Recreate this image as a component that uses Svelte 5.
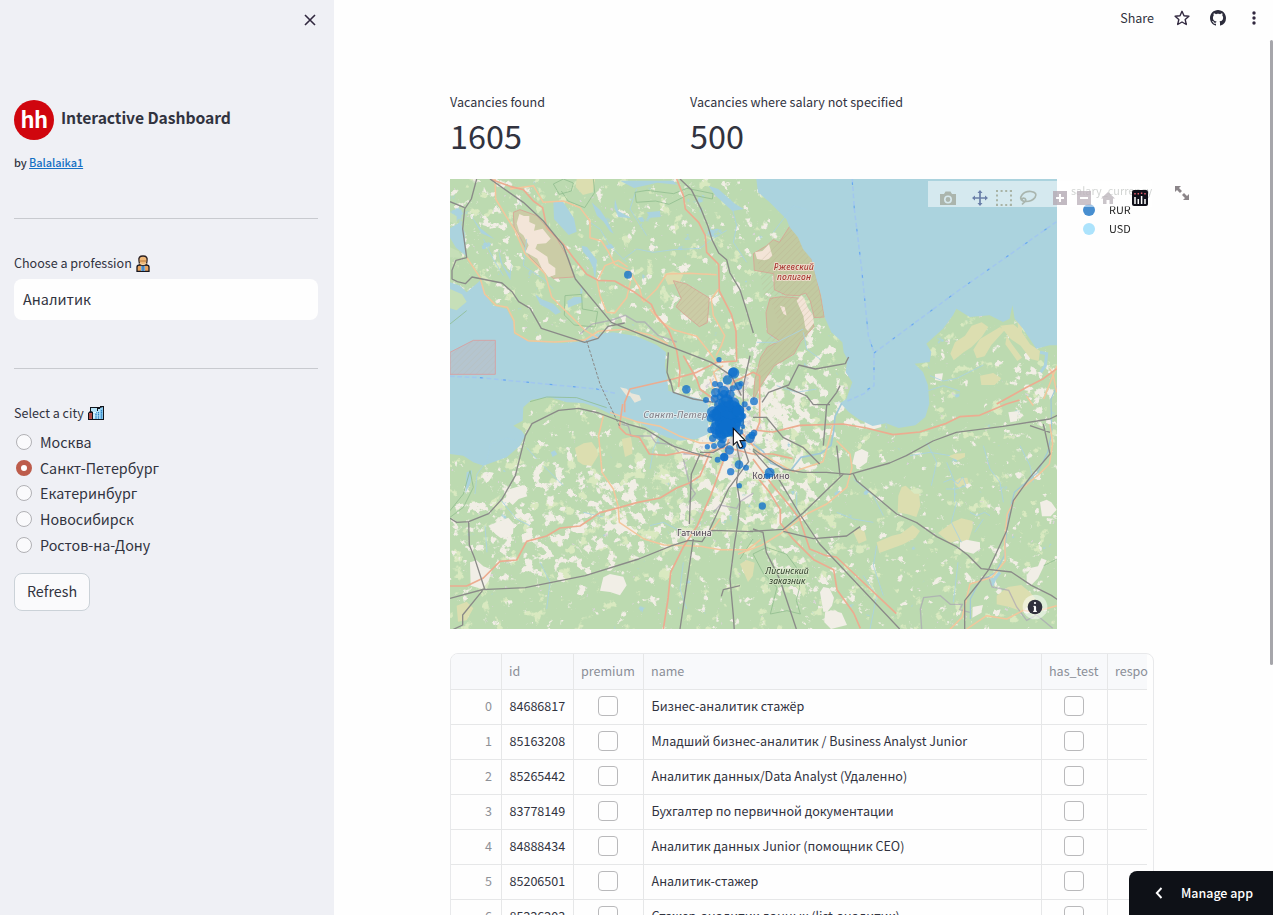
<script>
  const cities = ['Москва', 'Санкт-Петербург', 'Екатеринбург', 'Новосибирск', 'Ростов-на-Дону'];
  let city = $state('Санкт-Петербург');

  const rows = [
    ['84686817', 'Бизнес-аналитик стажёр'],
    ['85163208', 'Младший бизнес-аналитик / Business Analyst Junior'],
    ['85265442', 'Аналитик данных/Data Analyst (Удаленно)'],
    ['83778149', 'Бухгалтер по первичной документации'],
    ['84888434', 'Аналитик данных Junior (помощник CEO)'],
    ['85206501', 'Аналитик-стажер'],
    ['85226203', 'Стажер-аналитик данных (list-аналитик)']
  ];

  // land-cover textures: id, noise frequency, seed, cut-off, colour
  const covers = [
    ['cream', '0.032', 3, -0.69, '#f1eee5'],
    ['lime', '0.024', 11, -0.7, '#d9e9c0'],
    ['pond', '0.022', 37, -0.8, '#aad3df'],
    ['deep', '0.05', 52, -0.78, '#d9d4d6']
  ];

  const lone = [
    [534, 287, 12], [807, 542, 8], [709, 631, 13]
  ];
  // vacancy markers around the city centre
  const spots = [
    [191, 69, 17], [189, 67, 14], [172, 90, 14], [135, 102, 9], [150, 104, 9], [188, 115, 9], [205, 108, 12], [213, 101, 8],
    [137, 128, 14], [160, 124, 17], [180, 133, 14], [108, 150, 9], [134, 146, 12], [150, 140, 10], [170, 150, 18],
    [224, 163, 9], [236, 175, 7], [252, 154, 12], [150, 165, 18], [190, 160, 18], [165, 175, 22], [205, 180, 16],
    [128, 186, 17], [145, 195, 22], [180, 190, 26], [207, 200, 18], [220, 198, 9], [122, 204, 12], [160, 215, 26],
    [190, 215, 24], [208, 216, 14], [219, 230, 7], [140, 235, 20], [122, 240, 10], [170, 240, 22], [186, 244, 16],
    [152, 256, 16], [128, 265, 11], [140, 252, 14], [154, 282, 13], [158, 268, 12], [178, 300, 14], [112, 290, 8],
    [132, 288, 9], [143, 329, 9], [162, 321, 13], [163, 322, 12], [215, 284, 14], [240, 265, 14], [252, 249, 10], [246, 256, 11],
    [207, 344, 13], [228, 353, 9], [182, 365, 11], [208, 407, 8], [277, 468, 11], [299, 368, 15], [292, 378, 9],
    [196, 172, 16], [176, 205, 24], [150, 180, 16], [200, 236, 10], [212, 246, 8],
    [168, 162, 24], [185, 178, 28], [152, 190, 26], [200, 196, 24], [170, 212, 30], [148, 222, 24], [192, 226, 20],
    [158, 242, 24], [172, 232, 26], [134, 196, 18], [205, 182, 18], [162, 132, 12], [216, 286, 10]
  ];
</script>

<div class="app">
  <aside>
    <div class="closebar">
      <svg width="12" height="12" viewBox="0 0 12 12"><path d="M1 1L11 11M11 1L1 11" stroke="#31283f" stroke-width="1.6" fill="none" /></svg>
    </div>
    <div class="brand">
      <div class="logo"><span>hh</span></div>
      <h1>Interactive Dashboard</h1>
    </div>
    <div class="by">by <a href="#top">Balalaika1</a></div>
    <hr class="h1" />
    <div class="lbl prof">
      <span>Choose a profession</span>
      <svg width="14" height="17" viewBox="0 0 14 17">
        <path d="M1 16.5V12q0-2 3-2h6q3 0 3 2v4.500z" fill="#e9a560" stroke="#16161f" stroke-width="1.300" />
        <path d="M5 10h4v6H5z" fill="#6fa9d8" /><path d="M7 11v5" stroke="#2a63a8" />
        <path d="M3 6q-1-5 4-5t4 5l-.5 3Q7 12 3.500 9z" fill="#efb878" stroke="#2b2022" stroke-width="1.300" />
        <path d="M3.500 6h7" stroke="#b87838" /><path d="M3.500 8.500Q7 11 10.500 8.500" stroke="#fbe0b0" fill="none" />
      </svg>
    </div>
    <div class="input">Аналитик</div>
    <hr class="h2" />
    <div class="lbl city">
      <span>Select a city</span>
      <svg width="16" height="14" viewBox="0 0 16 14">
        <path d="M0 14V7l2-2V1h10V0h4v14z" fill="#11131a" />
        <path d="M3 2h6v3h1V3h2v10H5V6L3 5z" fill="#b5e3f7" /><path d="M12 2l3-1v12h-3z" fill="#8fcdf0" />
        <path d="M1 7h3v6H1z" fill="#c4534a" /><path d="M1 9h3M1 11h3" stroke="#8b3d3d" stroke-width=".7" />
        <path d="M8 6v7M10.500 6v7M13.500 4v9" stroke="#2f82c4" stroke-width="1.300" stroke-dasharray="1.500 .6" />
        <path d="M5 6.500h3M5 9h2M5 11h2" stroke="#e6fbff" />
      </svg>
    </div>
    <div class="radios">
      {#each cities as c}
        <button class="radio" onclick={() => (city = c)}>
          <i class:on={city === c}></i><span>{c}</span>
        </button>
      {/each}
    </div>
    <button class="refresh"><span>Refresh</span></button>
  </aside>

  <main>
    <header>
      <span class="share">Share</span>
      <svg width="16" height="16" viewBox="0 0 16 16"><path d="M8 1.300l2 4.500 4.900.5-3.700 3.300 1.100 4.900L8 12l-4.300 2.500 1.100-4.900L1.100 6.300 6 5.800z" fill="none" stroke="#31283f" stroke-width="1.400" stroke-linejoin="round" /></svg>
      <svg width="16" height="16" viewBox="0 0 16 16"><path fill="#2c2c3c" d="M8 0C3.580 0 0 3.580 0 8c0 3.540 2.290 6.530 5.470 7.590.4.070.55-.17.55-.38 0-.19-.01-.82-.01-1.490-2.010.37-2.530-.49-2.690-.94-.09-.23-.48-.94-.82-1.130-.28-.15-.68-.52-.01-.53.63-.01 1.080.58 1.230.82.72 1.210 1.870.87 2.330.66.07-.52.28-.87.51-1.070-1.780-.2-3.640-.89-3.640-3.950 0-.87.31-1.590.82-2.150-.08-.2-.36-1.020.08-2.120 0 0 .67-.21 2.200.82.64-.18 1.320-.27 2-.27s1.360.09 2 .27c1.530-1.040 2.200-.82 2.200-.82.44 1.100.16 1.920.08 2.120.51.56.82 1.270.82 2.150 0 3.070-1.870 3.750-3.650 3.950.29.25.54.73.54 1.480 0 1.070-.01 1.930-.01 2.200 0 .21.15.46.55.38A8.010 8.010 0 0 0 16 8c0-4.420-3.580-8-8-8" /></svg>
      <svg width="16" height="16" viewBox="0 0 16 16" fill="#31283f"><circle cx="8" cy="3" r="1.700" /><circle cx="8" cy="8" r="1.700" /><circle cx="8" cy="13" r="1.700" /></svg>
    </header>

    <section class="metrics">
      <div><p>Vacancies found</p><b>1605</b></div>
      <div><p>Vacancies where salary not specified</p><b>500</b></div>
    </section>

    <section class="chart">
      <svg class="map" width="607" height="450" viewBox="0 0 1821 1350">
        <defs>
          {#each covers as [id, freq, seed, cut, color]}
            <filter {id} filterUnits="userSpaceOnUse" x="0" y="0" width="1821" height="1350" color-interpolation-filters="sRGB">
              <feTurbulence type="fractalNoise" baseFrequency={freq} numOctaves="5" {seed} result="n" />
              <feComposite in="SourceGraphic" in2="n" operator="arithmetic" k2="1" k3="1" k4={cut} />
              <feComponentTransfer result="t"><feFuncA type="linear" slope="12" /></feComponentTransfer>
              <feFlood flood-color={color} /><feComposite in2="t" operator="in" />
            </filter>
          {/each}
          <filter id="soft" x="-50%" y="-50%" width="200%" height="200%"><feGaussianBlur stdDeviation="35" /></filter>
          <pattern id="hatch" width="13" height="13" patternUnits="userSpaceOnUse" patternTransform="rotate(45)"><path d="M0 0V13" stroke="#b7a98c" stroke-width="3" opacity=".45" /></pattern>
        </defs>
        <rect width="1821" height="1350" fill="#bcdab0" />
        <g filter="url(#lime)"><rect width="1821" height="1350" opacity=".03" /><g filter="url(#soft)"><ellipse cx="850" cy="850" rx="300" ry="220" opacity=".13" /><ellipse cx="420" cy="1020" rx="330" ry="150" opacity=".07" /><ellipse cx="1100" cy="1150" rx="130" ry="160" opacity=".06" /></g></g>
        <g filter="url(#cream)">
          <g filter="url(#soft)">
            <ellipse cx="280" cy="1020" rx="270" ry="190" opacity=".14" /><ellipse cx="640" cy="1000" rx="210" ry="150" opacity=".13" />
            <ellipse cx="850" cy="710" rx="180" ry="190" opacity=".26" /><ellipse cx="960" cy="930" rx="180" ry="120" opacity=".16" />
            <ellipse cx="130" cy="170" rx="110" ry="200" opacity=".09" /><ellipse cx="1090" cy="540" rx="80" ry="100" opacity=".12" />
            <ellipse cx="1120" cy="710" rx="150" ry="90" opacity=".14" /><ellipse cx="1100" cy="1190" rx="130" ry="120" opacity=".1" />
            <ellipse cx="1760" cy="640" rx="60" ry="130" opacity=".16" /><ellipse cx="1600" cy="1180" rx="150" ry="70" opacity=".09" />
            <ellipse cx="680" cy="380" rx="220" ry="90" opacity=".08" /><ellipse cx="940" cy="220" rx="50" ry="120" opacity=".12" />
            <ellipse cx="600" cy="170" rx="220" ry="140" opacity=".04" />
          </g>
        </g>
        <g filter="url(#deep)"><g filter="url(#soft)"><ellipse cx="835" cy="710" rx="90" ry="150" opacity=".3" /><ellipse cx="740" cy="1040" rx="50" ry="40" opacity=".25" /></g></g>
        <g filter="url(#pond)"><g filter="url(#soft)"><ellipse cx="700" cy="120" rx="200" ry="90" opacity=".11" /><ellipse cx="15" cy="110" rx="30" ry="110" opacity=".4" /><ellipse cx="1500" cy="900" rx="60" ry="40" opacity=".14" /></g></g>

        <!-- fields and heath -->
        <g fill="#dcdeb0">
          <path d="M380 0h55l-6 40-30 8-22-24zM640 285l30-8 30 10-12 26-34 4zM375 807l26-14 24-4 14 20 6 20-20 32-26-4-16-10zM515 780l28-6 4 26 0 24-22 10zM20 1280l30-12 20 20-20 36-26 4z" />
          <path d="M1345 950l10-26 12-4 26 24 14 0 4 36-12 34-26-8-30-6zM1480 1050l30-22 24-10 34 8 0 20-14 44-34-6-20 8-36-30zM1280 1090l46-20 26-6 36-26 22 18-14 20-36 20-72 26zM1510 910l18 -12 24-2 4 18-20 4-6 12zM1495 832l20-8 30 -2 0 12-22 10zM1640 1250l34-26 40-6 26 22 18 20-20 16-20 22-40-14-38-8zM1210 1060l14-12 20 10 6 26-24 10zM870 1155l20-12 24 8-6 40-14 18z" />
          <path d="M1515 490l30-20 20-30 30-10 20 14-20 30-30 30-24 16-30 24-10-20zM1590 480l60-36 14 10-40 44-20 34-24 6-10-26zM1650 440l40-4 20 16 30 44 30 20-4 30-24-6-30-40-30-20zM1590 590l40-8 24 16-20 20-40 0zM1670 470l16 26 30 40-14 10-36-50zM1700 400l16 0 0 60 40 60-20 0-30-50z" />
        </g>
        <g fill="#f1eee6">
          <path d="M180 930l40-12 12 34-26 8-18 18-22-20zM115 1040l20-8 40-16 16 18-2 30-36 14-16-12zM60 1150l20-6 20 18 26 10-10 34-20 24-34-10zM460 1195l20-10 40 8 10 26-20 30-30-10-30-4zM1110 1240l10-16 18 4 14 28-6 24-14 18-12 0zM1125 1300l20-6 30 8 16 36-48 12-20-20zM1240 708l18-12 32 4 4 44-20 6-26 0zM1215 820l20-10 20 10 -4 30-20 14-24-10zM1530 1090l20-8 40 8 0 20-20 14-40-10zM1770 970l20-8 14 8 16 22-18 20-26 0zM1730 1190l14-24 20-4 10-24 16 6-26 54-20 20-14 0zM1675 700l30-4-4 30-20 4zM1568 1284l31-6-6 24-26 14zM1455 585l24-2-4 24-20-4z" />
        </g>

        <!-- training grounds -->
        <g stroke="#d9a294" stroke-width="2.500">
          <path d="M190 100l20-8 50 18 60 68 36 62 16 54-62 4-36-30-34-34-28-56-20-34z" fill="#cbcca6" />
          <path d="M208 105l14 6 16 0 0 18 18 8 -4 18 26-6 24 30-14 14-26 2-6 14 36 24 4 20 20 14 0 20-20 8-20-26-14-30-36-20 10-20-16-30-12-10-8-26z" fill="#f3e5d8" stroke="none" />
          <path d="M670 305l40 10 68 42-6 74-24 12-46-38-24-22 16-24z" fill="#cbcca6" />
          <path d="M1019 142l24 20 22 50 18 24 14 50 14 60 12 68-30 2-12-50-14-24-20 8-40-2-34-16-2-48-58-10-3-50 40-24 20-18 18 8z" fill="#c2caa1" />
          <path d="M960 358l34-5 52 4 36 60 10 26-40 44-20 38-60 36-40 60-22 42 4-58 18-70 20-30 36-20-36-24-4-60z" fill="#c2caa1" />
        </g>
        <path d="M1040 365l14-16 8 8 12 30 14 20 4 24-18 26-8-10-6-36zM915 220l22-4 20-20 10 34-10 10-14 4-22-4zM990 380l14 4 6 26-10-6z" fill="#f3e4d7" />
        <path d="M670 305l40 10 68 42-6 74-24 12-46-38-24-22 16-24zM1019 142l46 70 32 74 26 128-60 20-120-76-20-110zM960 358l92 0 40 84-60 82-80 60-34 44 20-130 50-60z" fill="url(#hatch)" />

        <!-- open water -->
        <g fill="#abd3de">
          <path d="M0 310L30 320 50 340 90 305 108 350 130 380 170 390 190 430 192 465 240 488 340 492 400 487 440 465 490 460 560 472 620 498 648 520 645 560 652 600 655 635 690 645 760 662 775 680 775 765 740 780 690 785 650 775 600 750 560 727 520 717 480 705 440 685 400 672 350 670 300 655 245 662 220 685 218 725 190 740 215 755 225 770 210 800 170 835 100 860 70 850 40 830 0 825z" />
          <path d="M919 0l5 40 35 30 25 25 25 25 10 25 25 30 15 35 25 30 15 60 15 50 10 65 20 45 33 30 4 30 11 20-5 40 20 30-18 50-18 12 25 27 30 22 42 20 40-8 38 14 50-8 30-25 12-40-4-55-15-40-25-25 45-5 5-30-15-25 50-45 30-40 10-20 40 25 60-5 40 20 20-10 8-40 7 40 25 30 40 60 40-10h32V0z" />
          <path d="M310 70l26-6 36 54 8 40-24 10-44-48zM395 200l16 4 30 40-6 62-6-40-14-30-16-18zM425 70l26 24 20 30 20 40-10-6-20-30-20-18zM495 60l10 36 40 22-40-4-12-28zM510 5l160 0 12 12-60-6-70 16zM775 20l30 10 50 44 26 16-34 6-50-46zM255 345l20 16 36 14 22 24-16 8-20-16-26-14zM60 105l30 42 44 34-40-18zM145 210l14 50 20 24 6-36-4 56-30-54zM465 200l18-6 10 12-22 4zM590 100l40-4 2 18-30 2zM30 130l14 30 4 70-30-24-18-30v-28zM352 366l20-12 22 0 4 16-24 8-20 8zM302 820l12-6 8 12-14 8zM50 880l16-6-4 36-16 34z" />
        </g>
        <path d="M0 330l36 16 14 22-30 26-20-6zM0 205l26 12 10 20-36-2zM0 100l20 12 0 24-20-8z" fill="#c6dfb8" /><path d="M510 625l20 4 14 14 24 6 6 14-20 8-14-20-10 0z" fill="#e8e6da" />
        <g fill="none" stroke="#a9d3e2" stroke-width="2.500" stroke-linejoin="round">
          <path d="M520 240l40-30 50 10 60-8 80-4 40-30 40-24M420 130l30 20 30 50 50 50M100 180l30 60 30 50M230 180l-10 80 60 40 30 30M560 30l-20 60 50 80M840 60l20 80-10 50 40 60M600 870l10-60 24-50 20-10M75 945l6-60 30-40 10-50 50-18 30 8M150 960l50 60 40 20M105 1040l6 80M270 1150l30 60-10 80M600 1040l40-10 60 30M700 1150l-10 80 20 60M280 860l60 60M260 840l-30-34M400 1000l60 14" />
          <path d="M970 160l60-80 40 12M1060 450l-80 40-60 0M980 620l60 20 60-10M1060 460l10 50 40 30M1430 790l30 60-16 70M1520 970l-16 60 30 60M1490 850l24 60 0 60M1600 800l20 70 30 40 10 60M1710 800l30 60 10 50M1600 1020l-26 40M1280 1100l-10 60 30 90M1510 1270l14-120M1160 1000l50 20 60 10M1210 900l60 50 30 60M1380 830l60-10 60 10M1040 940l0 60-20 40M1240 1190l40 60-20 100" />
          <path d="M1480 910l24-10 20 14 14-20 10 26-30 10-30 0M1560 1000l20 10 24-10 16 10M1440 590l40 16 40-8 80-40M1420 640l60-20 50 16" />
        </g>
        <g fill="none" stroke="#a0c8d8" stroke-width="5">
          <path d="M909 795l30 22 24 36 60 20 30-38 60-12 30-24 8-42 4-44 20-40" />
          <path d="M1821 620l-18 40 2 100-12 60-30 60-70 60-20 80-10 110-26 50-50 30-26 50 0 60" stroke-width="3.500" />
        </g>
        <path d="M1770 520l20 4-4 36-14 20M1650 1180l-16 20-8 20" fill="none" stroke="#abd3de" stroke-width="9" />

        <!-- protected areas -->
        <g fill="none" stroke="#8ebb8c" stroke-width="3" opacity=".75">
          <path d="M310 15l30-15 30 12-6 24-36 10zM430 0l4 40-30 46-50-20-20-30M555 40l36-6 80 10 40-16 78 16-2 16-70-14-60 30-40-10-58 4zM345 350l50-4 2 44 46 8-8 46-62-6-30-30zM0 435l50-40M0 1015l40-30 30-60-10-50-20 70-40 50M240 668l50-14 90 2 90 30" />
          <path d="M909 1125l40-20 60 20 30 40 10 60-10 40 12 40-40-10-50 10 20-80-40-40zM1821 1140l-40 20M870 1140l39-60" />
        </g>
        <g fill="none" stroke="#a8a0b4" stroke-width="4" opacity=".65">
          <path d="M390 465l36-30 60-12 40-14 34 20 24 0 40 40 56 20M515 735l20 6 8 30 60 0 14 20 50 6 20 24 32 0M700 840l20 80 16 24-20 26M790 1000l20-22 50 10 10-20 40-26M700 825l50 0" />
          <path d="M1415 1350l-4-60 10-34 50-6 30 26 36 0-8 16 30 8M1590 1200l26-6 10 30 50 10 24 50 30 40 30-16 48 40" />
        </g>
        <path d="M0 520l70-36h66v102H0z" fill="#b8c2ca" fill-opacity=".8" stroke="#d4a4a6" stroke-width="3" />
        <path d="M0 520l70-36h66v102H0z" fill="url(#hatch)" opacity=".5" />
        <g fill="none" stroke="#a2c7ee" stroke-width="4.500" stroke-dasharray="14 8">
          <path d="M0 592l90 4 350 34 60 14M1207 0l6 90 22 180 20 200 17 50 0 100-30 24-50 22M1272 522l250-185 200-140 99-70" />
        </g>
        <g fill="none" stroke="#66a9ee" stroke-width="3.500" stroke-dasharray="8 62"><path d="M90 596l350 34 60 14M1207 10l6 80 22 180 20 200 17 50v100l-62 36M1272 522l250-185 200-140 99-70" /></g>

        <!-- secondary roads -->
        <g fill="none" stroke="#f3c69c" stroke-width="4.500" stroke-linejoin="round">
          <path d="M50 235l40 60 14 50 34 34 34 6 20 40 2 36 40 24 80 4 90-6 40-26 80-6 80 18 50 26M135 0l2 60 30 50 28 44 30 70 40 40 20 20 20 70 40 40 60 60 40 24M180 30l70-10 30 50 60-4 50 20 30 40 0 50 34 10 20 30 20 40 44 20 30 50 10 40M445 300l20-40 40-16 28 20M440 300l10 50 20 50 24 2 36-46 12-50M580 370l40-40 30-45 70-2 80 4M600 390l30 36 40 26 70 20 40 50 20 30M806 330l-22 30 6 50 34 60-10 30-16 30" />
          <path d="M460 710l-14 60 10 110 34 50 14 50 4 50 74 50 60 18 110 4 60 10 80 0 40-30M480 700l80 28 70 14 60 30 60 20 40 0M780 600l20 60 36 20M820 560l-30 20 30 80M740 1070l40-10 30-40" />
          <path d="M909 800l30 28 90 50 90-30 20-70 10-40M1160 785l40 40 6 40-16 60-60 50-60 30-40 30-40 30-56 34-70 26M1820 640l-10-50-10-20M1750 680l-20-28M1800 735l8 60-10 60-30 30-60 50-36 70-8 80 2 60-40 50-66 20-24 100-60 60-50 40M1550 1350l60-40 60 10 50-26 30 6 70-20M1821 560l-40 100" />
        </g>
        <!-- trunk roads -->
        <g fill="none" stroke="#ecac90" stroke-width="5" stroke-linejoin="round">
          <path d="M120 0l60 22 40 10 30 34 28 20 12 60 50 50 30 40 40 50 34 18 50 2 60 34 50 36 12 28 40 50 24 60 10 60-4 50M680 0l20 50 6 40 40 40 20 40 4 50 36 36 2 80 36 70 14 50 2 90-60 4-60 30-70 20-130 30-16 40 0 30" />
          <path d="M518 675l-10 70 20 20 40 10 30 50 50 4 50-10 60 12 30-16 40-10 80 20 60 0 60 14M0 1221l50 0 50-24 50-50 50-4 30-56 60-16 40-24 60-6 60-40 60-16 50-14 70-14 50-30 40-16 30-20 30-70M640 1350l14-90 8-80 40-80 40-60 40-90 40-110 14-60M700 530l40 70 10 30 40 30 24 40" />
          <path d="M909 753l60 6 80-20 130-4 70 12 80 20 80-8 80-26 40-20 60-4 80-34 40-12M1640 675l90-50 50-26 40-30M909 840l60 80 50 60 30 40 30 90 50 20 30 4 180 170M909 880l50 60 32 52 0 40 40 50 60 60 60 30 10 60 50 70 20 46M909 800l-60-70-20-50 20-70 60-30 20 10 0 140-24 60" />
        </g>
        <!-- railways -->
        <g fill="none" stroke="#8a8a88" stroke-width="4" stroke-linejoin="round">
          <path d="M120 0l100 70 60 56 60 74 36 100 108 130 170 70 130 50 60 40 30 60M80 0l-16 60-20 30-6 60 12 86-32 8-12 30 0 26 16 8 24 6 20-20 90 18 30 26 20 30 34 20 34 60 130 42 40-12 30-36 50-10M0 68l44 18M690 0l34 32 30 60 20 50 12 40 20 40 24 20 10 40 30 50 16 50 24 80" />
          <path d="M410 485l40 130 60 130" stroke-dasharray="9 5" stroke-width="3" />
          <path d="M900 530l-20 90 0 120-20 60 10 50-10 60 10 60-6 60-10 60-14 110 10 110 6 90M660 600l10 40 60 20 60 10M655 520l-4 60 10 30" />
          <path d="M0 1018l20 12 36-2 60-24 40-44 40-70 30-120 20-36 80-40 60-6 60 14 90 34 50 14 80 50 60 20 60 16M56 1028l2 70 16 40 30 92-104 28M96 1232l130-6 180-36 160-50 100-40 50-16 40 4 20-30 60-130 60-80-20-60M98 1234l-60 74 0 30-38 18M690 1350l40-270M750 825l-26 60-6 150M750 820l40 0 50-30M738 1070l50-16 121 4M870 1220l-50 12-6 20" />
          <path d="M909 810l90 60 60 10 70 0 70 6 120-34 50-22 80-44 70-26 140-18 140-22 25-12M909 815l80 90 60 100 60 90 240 255M909 715l40 0 50 60 60 30 50 50M1180 885l-10 10-110 106-60 50-100 6M1160 800l10 90M1210 885l10 20 60 50 60 50 60 26 60 42 60 30 34 26 40 40 90 10 60 40 60 30 66 45M1780 735l20 90-60 70-50 70-20 90-56 120-30 40-40 50 0 90M1000 1057l90 22 100-8 40-28M909 1050l30 10 10 60 40 80 50 150M936 670l20-30 60-22 30-60 50 12 90-16 10-20M1010 625l60 26 20 26 50 0M1120 800l10-120 30-40 10-20M1740 740l60 20" />
        </g>

        <!-- place names -->
        <g font-family="'Noto Sans', sans-serif" stroke-linejoin="round" paint-order="stroke" text-anchor="middle">
          <g font-size="26" font-style="italic" font-weight="500" fill="#a93a34" stroke="#ecdccb" stroke-width="6"><text x="1031" y="274" textLength="120">Ржевский</text><text x="1032" y="304" textLength="102">полигон</text></g>
          <g font-size="26" font-style="italic" fill="#2c3b28" stroke="#d6e7c8" stroke-width="5"><text x="1011" y="1184" textLength="130">Лисинский</text><text x="1012" y="1215" textLength="108">заказник</text></g>
          <text x="676" y="717" font-size="28" font-style="italic" font-weight="500" fill="#85858e" stroke="#e4eef0" stroke-width="5" textLength="192">Санкт-Петер</text>
          <text x="733" y="1070" font-size="27" fill="#4b4350" stroke="#eeeae4" stroke-width="5" textLength="104">Гатчина</text>
          <text x="963" y="901" font-size="26" fill="#4b4350" stroke="#eeeae4" stroke-width="5" textLength="112">Колпино</text>
        </g>

        <g fill="#0d6ecc" fill-opacity=".76">
          {#each lone as [x, y, r]}<circle cx={x} cy={y} r={r} />{/each}
          <g transform="translate(660 513)">{#each spots as [x, y, r]}<circle cx={x} cy={y} r={r} />{/each}</g>
        </g>
        <path d="M850 748v50l11-10 8 18q5 2 9-4l-8-17h16z" fill="#fff" stroke="#14141c" stroke-width="3.500" />
        <circle cx="1755" cy="1284" r="37" fill="#fff" opacity=".5" />
        <circle cx="1755" cy="1284" r="22" fill="#30303c" /><path d="M1755 1272v.1M1755 1284v12" stroke="#fff" stroke-width="6.500" stroke-linecap="round" fill="none" /><path d="M1750 1282h6M1749 1297h12" stroke="#fff" stroke-width="3" />
      </svg>

      <div class="legend">
        <div class="ltitle">salary_currency</div>
        <div class="litem"><i class="rur"></i><span>RUR</span></div>
        <div class="litem"><i class="usd"></i><span>USD</span></div>
      </div>

      <svg class="modebar" width="224" height="26" viewBox="0 0 224 26">
        <rect width="224" height="26" fill="#fff" opacity=".5" />
        <g fill="#a4ada2" opacity=".85">
          <path d="M12 13h4l1.500-2.500h5L24 13h4v11H12z" /><circle cx="20" cy="18.500" r="3.200" fill="none" stroke="#d8e9ee" stroke-width="1.600" />
        </g>
        <g stroke="#6a7fa8" stroke-width="1.700" fill="#6a7fa8"><path d="M52 10.500v13M45.500 17h13" /><path d="M52 9l2.500 3h-5zM52 25l2.500-3h-5zM44 17l3-2.500v5zM60 17l-3-2.500v5z" stroke="none" /></g>
        <path d="M68 10h16M68 24h16M69 9v16M83 9v16" stroke="#a9b3a5" stroke-width="2" stroke-dasharray="2 2.600" fill="none" />
        <path d="M95 20q-4-2-1-6 3-4 9-3.500 7 1 4 6-3 4-9 4-4 0-4-2t3-1q2 2-1 4l-2 2" fill="none" stroke="#a9b5ae" stroke-width="1.700" />
        <g opacity=".8">
          <path d="M125 10h14v14h-14z" fill="#b3a9b2" /><path d="M132 13v8M128 17h8" stroke="#fff" stroke-width="2" />
          <path d="M149 10h14v14h-14z" fill="#beb4bd" /><path d="M152 17h8" stroke="#fff" stroke-width="2" />
          <path d="M173 17.500l7-6.500 7 6.500h-2V23h-3.500v-4h-3v4H175v-5.500z" fill="#bdb6bd" />
        </g>
        <rect x="204" y="9" width="16" height="16" rx="2" fill="#10101a" />
        <path d="M207 16v7M210.300 18v5M213.600 15v8M217 18v5" stroke="#fff" stroke-width="1.500" /><path d="M207 12v1.500M210.300 12v1.500M213.600 11.500v1.500M217 12v1.500" stroke="#e45a6c" stroke-width="1.500" />
      </svg>
      <svg class="expand" width="16" height="16" viewBox="0 0 16 16"><path d="M1 1h6L5 3l3 3-2 2-3-3-2 2zM15 15H9l2-2-3-3 2-2 3 3 2-2z" fill="#8b8589" /></svg>
    </section>

    <section class="table">
      <div class="grid head">
        <div></div><div>id</div><div>premium</div><div>name</div><div>has_test</div><div>respo</div>
      </div>
      {#each rows as [id, name], i}
        <div class="grid">
          <div class="idx">{i}</div><div>{id}</div><div class="c"><i></i></div><div class="nm">{name}</div><div class="c"><i></i></div><div></div>
        </div>
      {/each}
    </section>
    <div class="thumb"></div>
    <div class="manage">
      <svg width="8" height="12" viewBox="0 0 8 12"><path d="M6.500 1L1.800 6l4.700 5" stroke="#fff" stroke-width="1.900" fill="none" /></svg>
      <span>Manage app</span>
    </div>
  </main>
</div>

<style>
  :global(body) { margin: 0; }
  .app { position: relative; display: flex; width: 1273px; height: 915px; overflow: hidden; background: #fefefe; color: #31333f; font-family: 'Noto Sans CJK SC', 'Noto Sans', sans-serif; font-size: 12.550px; line-height: 20px; white-space: nowrap; }
  aside { box-sizing: border-box; width: 334px; height: 915px; padding: 0 16px 0 14px; background: #eff0f5; display: flex; flex-direction: column; flex: none; }
  .closebar { height: 100px; padding: 14px 2px 0 0; box-sizing: border-box; display: flex; justify-content: flex-end; }
  .brand { display: flex; height: 40px; gap: 7px; }
  .logo { width: 40px; height: 40px; border-radius: 50%; background: #d0060e; color: #fff; font-weight: 700; font-size: 22px; line-height: 37px; text-align: center; letter-spacing: -.5px; }
  h1 { margin: 0; font-size: 15.700px; font-weight: 600; line-height: 35px; letter-spacing: -.07px; }
  .by { margin-top: 12px; height: 21px; font-size: 11px; font-weight: 500; letter-spacing: -.08px; }
  a { color: #1570c4; text-decoration: underline; }
  hr { width: 100%; border: 0; margin: 0; height: 1px; background: #c8cacf; flex: none; }
  .h1 { margin-top: 45px; }
  .h2 { margin-top: 48px; }
  .lbl { display: flex; gap: 4px; align-items: center; height: 20px; }
  .prof { margin-top: 34px; }
  .city { margin-top: 34px; }
  .input { box-sizing: border-box; height: 41px; margin-top: 6px; padding-left: 9px; border-radius: 8px; background: #fefefe; font-size: 14.400px; line-height: 40px; }
  .radios { margin-top: 6px; padding-left: 2px; display: flex; flex-direction: column; }
  .radio { font: inherit; color: inherit; text-align: left; border: 0; padding: 0; background: none; display: flex; align-items: center; gap: 8px; height: 25.750px; font-size: 14.300px; }
  .radio i { box-sizing: border-box; width: 16px; height: 16px; border-radius: 50%; border: 1px solid #b1b1b5; background: #fafafc; }
  .radio i.on { border: 5px solid #bd5c4b; background: #fff; }
  .refresh { box-sizing: border-box; width: 76px; height: 38px; margin-top: 15.600px; border: 1px solid #cbd2d8; border-radius: 8px; background: #fafafc; color: inherit; font: inherit; font-size: 14.300px; padding: 0 0 2px; }
  main { width: 939px; height: 915px; padding-left: 116px; box-sizing: border-box; display: flex; flex-direction: column; }
  header { height: 36px; display: flex; align-items: center; justify-content: flex-end; gap: 20px; padding-right: 11px; flex: none; }
  .metrics { display: flex; height: 143px; padding-top: 56px; box-sizing: border-box; flex: none; }
  .metrics div { width: 240px; }
  p { margin: 0; height: 20px; }
  .metrics b { display: block; font-weight: 400; font-size: 32.400px; line-height: 45px; }
  .chart { position: relative; display: flex; height: 450px; flex: none; }
  .map { display: block; flex: none; }
  .legend { padding: 3px 0 0 14px; font-size: 10.900px; line-height: 19px; color: #222; }
  .ltitle { color: #a5aaa7; height: 18px; line-height: 16px; }
  .litem { display: flex; height: 19px; align-items: center; gap: 14px; padding-left: 12px; }
  .litem i { width: 12px; height: 12px; border-radius: 50%; }
  .rur { background: #478ed0; }
  .usd { background: #ace3fc; }
  .modebar { position: absolute; left: 478px; top: 2px; }
  .expand { position: absolute; left: 724px; top: 6px; }
  .table { width: 704px; height: 300px; margin-top: 24px; border: 1px solid #e8e9eb; border-radius: 8px 8px 0 0; box-sizing: border-box; overflow: hidden; flex: none; }
  .grid { display: grid; grid-template-columns: 51px 72px 70px 398px 66px 39px; height: 35px; width: 696px; box-sizing: border-box; border-bottom: 1px solid #e6e7e8; }
  .grid > div { box-sizing: border-box; border-right: 1px solid #e6e7e8; padding-left: 7.500px; line-height: 32px; }
  .grid > div:first-child { padding-right: 9px; }
  .grid > div:last-child { border-right: 0; padding-left: 7px; }
  .grid.head { height: 36px; background: #f8f9fb; color: #8b8f98; }
  .grid.head > div { line-height: 34px; padding-left: 7px; }
  .idx { text-align: right; color: #8e9197; }
  .grid > .c { display: flex; align-items: center; justify-content: center; padding: 0 1px 2px 0; }
  .c i { box-sizing: border-box; width: 20px; height: 20px; border: 1px solid #b9b9bb; border-radius: 4px; }
  .thumb { position: absolute; right: 0; top: 40px; width: 3px; height: 625px; background: #a6a6ab; border-radius: 2px; }
  .manage { position: absolute; right: 0; bottom: 0; width: 144px; height: 44px; box-sizing: border-box; padding-left: 26px; display: flex; align-items: center; gap: 18px; background: #0e1117; color: #fff; border-radius: 8px 0 0 0; font-weight: 500; font-size: 12.450px; }
</style>
